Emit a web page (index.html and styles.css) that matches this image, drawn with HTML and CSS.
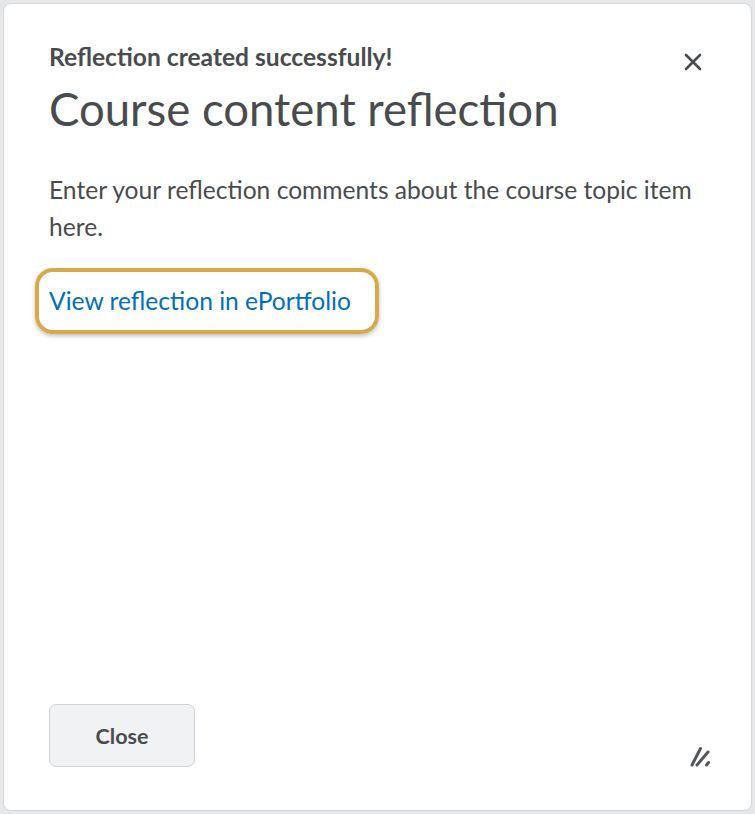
FILE: index.html
```html
<!DOCTYPE html>
<html>
<head>
<meta charset="utf-8">
<link rel="stylesheet" href="styles.css">
</head>
<body>
<div class="backdrop">
  <div class="dialog">
    <div class="header">
      <div class="titles">
        <div class="status">Reflection created successfully!</div>
        <h1 class="title">Course content reflection</h1>
      </div>
      <button class="close-x" aria-label="Close">
        <svg width="20" height="20" viewBox="0 0 20 20"><path d="M3 3 L17 17 M17 3 L3 17" stroke="#494c4e" stroke-width="2.6" stroke-linecap="round" fill="none"/></svg>
      </button>
    </div>
    <div class="content">
      <p class="desc">Enter your reflection comments about the course topic item here.</p>
      <a class="link" href="#">View reflection in ePortfolio</a>
    </div>
    <div class="footer">
      <button class="btn">Close</button>
      <svg class="resize" width="22" height="22" viewBox="0 0 22 22"><path d="M3 20 L11.5 3.5 M8 20 L19 7 M17.5 20 L19.5 17.5" stroke="#55585a" stroke-width="3" stroke-linecap="round" fill="none"/></svg>
    </div>
  </div>
</div>
</body>
</html>
```
FILE: styles.css
```css
html, body { margin: 0; padding: 0; }
body {
  background: #e6e7e9;
  font-family: Lato, "Noto Sans", sans-serif;
  color: #494c4e;
  width: 755px;
  height: 814px;
  overflow: hidden;
}
.backdrop {
  padding: 3px;
  height: 808px;
}
.dialog {
  box-sizing: border-box;
  height: 808px;
  background: #fff;
  border: 1px solid #d3d7dc;
  border-radius: 8px;
  display: flex;
  flex-direction: column;
  padding: 0 0 0 45px;
}
.header {
  display: flex;
  justify-content: space-between;
  padding-top: 38px;
}
.status {
  font-size: 24.6px;
  font-weight: 700;
  line-height: 30px;
}
.title {
  margin: 10px 0 0;
  font-size: 45.5px;
  font-weight: 400;
  line-height: 54px;
}
.close-x {
  background: none;
  border: none;
  padding: 0;
  margin: 10px 48px 0 0;
  width: 20px;
  height: 20px;
  align-self: flex-start;
}
.content {
  flex: 1;
  padding-right: 50px;
}
.desc {
  margin: 35px 0 0;
  font-size: 24.6px;
  line-height: 37px;
}
.link {
  display: inline-block;
  margin-top: 23px;
  margin-left: -14px;
  padding: 14px 24px 14px 10px;
  color: #006fbf;
  text-decoration: none;
  font-size: 24.6px;
  line-height: 30px;
  border: 4px solid #d6aa4a;
  border-radius: 18px;
  box-shadow: 0 2px 4px rgba(0,0,0,0.25);
}
.footer {
  display: flex;
  justify-content: space-between;
  align-items: flex-end;
  padding: 0 40px 43px 0;
}
.btn {
  width: 146px;
  height: 63px;
  background: #f1f2f4;
  border: 1px solid #cdd5dc;
  border-radius: 7px;
  font-family: Lato, sans-serif;
  font-weight: 700;
  font-size: 21.5px;
  color: #494c4e;
}
```
